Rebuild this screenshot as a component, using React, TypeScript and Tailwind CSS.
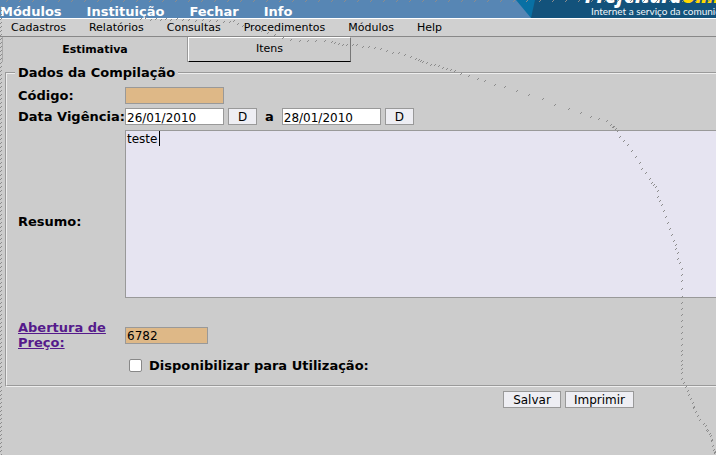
import { useId } from "react";

const MENUS = ["Módulos", "Instituição", "Fechar", "Info"];
const SUBMENUS = ["Cadastros", "Relatórios", "Consultas", "Procedimentos", "Módulos", "Help"];

const TRAIL: [number, number][] = [
  [140, 18], [145, 17], [150, 19], [155, 18], [160, 19], [165, 18], [170, 19], [176, 18], [182, 19], [188, 19],
  [195, 20], [202, 19], [209, 20], [216, 20], [223, 21], [229, 21], [233, 20], [237, 23], [242, 25], [253, 28],
  [261, 30], [267, 32], [274, 34], [282, 37], [290, 39], [299, 40], [307, 40], [315, 40], [324, 40], [331, 41],
  [334, 42], [338, 43], [342, 44], [346, 44], [352, 44], [356, 44], [362, 46], [368, 46], [374, 47], [380, 48],
  [386, 50], [392, 52], [398, 52], [404, 54], [410, 56], [415, 58], [418, 59], [420, 60], [422, 61], [426, 62],
  [430, 64], [434, 64], [438, 65], [442, 67], [446, 68], [450, 69], [454, 70], [460, 73], [468, 75], [477, 78],
  [484, 80], [494, 84], [504, 86], [516, 90], [528, 94], [542, 98], [554, 104], [568, 108], [580, 112], [590, 116],
  [598, 118], [606, 120], [610, 124], [612, 126], [613, 126], [615, 128], [617, 130], [619, 136], [623, 140],
  [627, 144], [631, 150], [635, 156], [639, 162], [641, 168], [645, 172], [649, 178], [651, 182], [653, 184],
  [655, 186], [657, 190], [657, 196], [659, 200], [661, 204], [663, 210], [665, 216], [667, 222], [669, 228],
  [671, 234], [673, 240], [675, 244], [675, 248], [677, 252], [677, 258], [679, 262], [681, 268], [681, 274],
  [681, 280], [681, 288], [681, 296], [681, 302], [681, 308], [681, 314], [681, 320], [681, 326], [681, 332],
  [681, 338], [681, 344], [681, 350], [681, 354], [681, 360], [681, 364], [681, 368], [681, 372], [681, 378],
  [683, 382], [685, 386], [687, 390], [688, 394], [690, 398], [692, 402], [693, 406], [693, 407], [695, 411],
  [697, 415], [699, 419], [703, 423], [705, 425], [706, 429], [707, 430], [709, 433], [710, 435], [711, 439],
  [711, 440], [712, 445], [713, 449], [714, 451], [714, 452],
];

for (let y = 6; y < 455; y += 4) TRAIL.push([0, y]);
for (let x = 6; x < 716; x += 13) TRAIL.push([x, 0]);

const dots = TRAIL.map(([x, y]) => `M${x} ${y + 1}h1v1h-1zM${x + 1} ${y}h1v1h-1z`).join("");

function Logo() {
  return (
    <svg className="h-[18px] w-[200px] shrink-0" viewBox="0 0 200 18" role="img" aria-label="Prefeitura Online">
      <path d="M0 0h20l-4 18h-1z" fill="#0870a4" />
      <path d="M19 0h181v18H15z" fill="#13527b" />
      <text x="69" y="3" fill="#fff" fontFamily="'Open Sans', sans-serif" fontSize="19" fontWeight="800" fontStyle="italic">
        Prefeitura<tspan fill="#ffd800">Online</tspan>
      </text>
      <text x="75" y="15" fill="#f0f6fa" fontFamily="Lato, sans-serif" fontSize="10">
        Internet a serviço da comunidade
      </text>
    </svg>
  );
}

const field = "h-[17px] border border-[#999] px-px pt-0.5 text-[12px] leading-[13px] outline-none";
const button = "h-[17px] border border-[#999] bg-[#eeeef3] pt-0.5 text-[12px] leading-[13px]";
const label = "text-[13px] font-bold leading-[15px]";

export default function App() {
  const id = useId();
  return (
    <div className="relative min-h-screen overflow-hidden bg-[#ccc] font-['DejaVu_Sans',sans-serif] text-black">
      <header className="flex h-[19px] justify-between border-b border-white bg-[#5786b4]">
        <nav className="flex gap-[25px] pt-1 text-[13px] font-bold leading-[15px] text-white">
          {MENUS.map((m) => <button key={m} type="button">{m}</button>)}
        </nav>
        <Logo />
      </header>
      <nav className="flex h-[18px] gap-[23px] border-b border-[#888] bg-[#d0d0d0] pl-[11px] text-[11px] leading-[17px]">
        {SUBMENUS.map((m) => <button key={m} type="button">{m}</button>)}
      </nav>
      <div role="tablist" className="flex h-[25px] pl-[2px] text-[11px]">
        <button role="tab" aria-selected="true" type="button" className="w-[186px] border-x border-l-[#a8a8a8] border-r-[#999] pt-0.5 font-bold">Estimativa</button>
        <button role="tab" aria-selected="false" type="button" className="w-[163px] border border-t-white border-r-[#777] border-b-black border-l-white">Itens</button>
      </div>
      <form className="pl-[5px]" onSubmit={(e) => e.preventDefault()}>
        <fieldset className="mt-[3px] border-2 border-r-0 border-[#eee] [border-style:groove] pb-3 pl-[11px]">
          <legend className="-ml-[3px] px-[3px] text-[13px] font-bold leading-[15px]">Dados da Compilação</legend>
          <div className="grid grid-cols-[107px_minmax(0,1fr)] items-center gap-y-1 pt-[7px]">
            <label className={label} htmlFor={id + "c"}>Código:</label>
            <input id={id + "c"} className={`${field} w-[99px] bg-[#deb887]`} />
            <label className={`${label} whitespace-nowrap`} htmlFor={id + "d"}>Data Vigência:</label>
            <div className="flex items-center">
              <input id={id + "d"} className={`${field} w-[99px] bg-white`} defaultValue="26/01/2010" />
              <button type="button" className={`${button} ml-1 w-[29px]`}>D</button>
              <label className={`${label} mx-2`} htmlFor={id + "e"}>a</label>
              <input id={id + "e"} className={`${field} w-[99px] bg-white`} defaultValue="28/01/2010" />
              <button type="button" className={`${button} ml-1 w-[29px]`}>D</button>
            </div>
            <label className={`${label} pt-4`} htmlFor={id + "r"}>Resumo:</label>
            <div className="relative pt-px">
              <textarea id={id + "r"} className="block h-[168px] w-full resize-none border border-r-0 border-[#999] bg-[#e6e4f1] px-px text-[12px] leading-4 outline-none" defaultValue="teste" />
              <span className="absolute left-[34px] top-0.5 h-[15px] w-px bg-black" />
            </div>
            <a href="#preco" className={`${label} mt-[18px] text-[#551a8b] underline`}>Abertura de Preço:</a>
            <input aria-label="Abertura de Preço" className={`${field} mt-[18px] w-[83px] bg-[#deb887]`} defaultValue="6782" />
          </div>
          <div className="flex items-center pl-[111px] pt-2">
            <input id={id + "u"} type="checkbox" className="size-[13px] appearance-none rounded-xs border border-[#888] bg-white" />
            <label className={`${label} ml-[7px]`} htmlFor={id + "u"}>Disponibilizar para Utilização:</label>
          </div>
        </fieldset>
        <div className="flex gap-1 pl-[498px] pt-1">
          <button type="submit" className={`${button} w-[58px]`}>Salvar</button>
          <button type="button" className={`${button} w-[69px]`}>Imprimir</button>
        </div>
      </form>
      <svg className="pointer-events-none absolute left-0 top-0 h-[455px] w-[716px]" viewBox="0 0 716 455" shapeRendering="crispEdges" aria-hidden="true">
        <path d={dots} fill="#8c8c8c" />
      </svg>
    </div>
  );
}
